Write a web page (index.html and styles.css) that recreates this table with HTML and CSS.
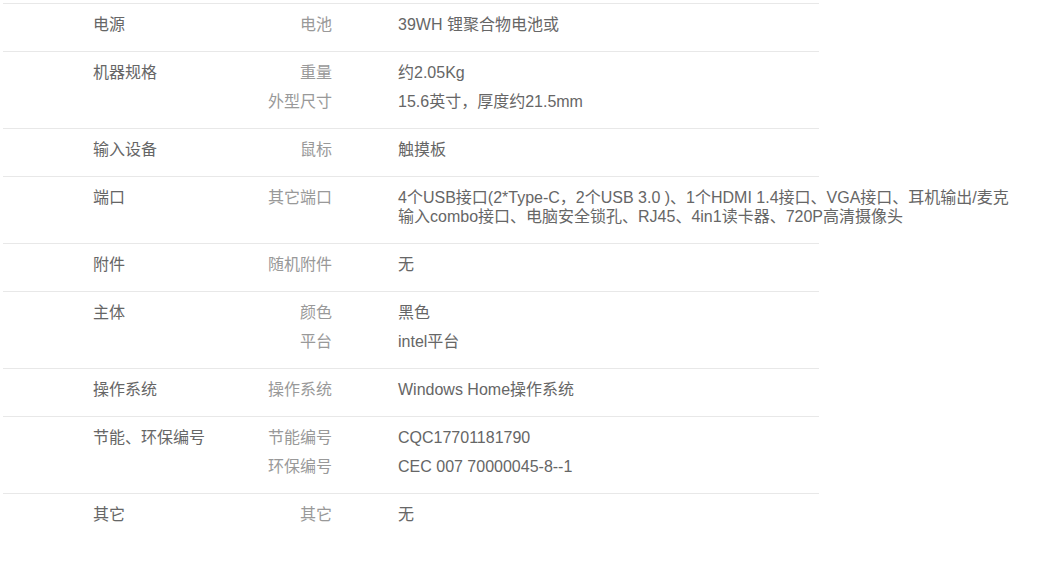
FILE: index.html
```html
<!DOCTYPE html>
<html lang="zh-CN">
<head>
    <meta charset="UTF-8">
    <meta name="viewport" content="width=device-width, initial-scale=1.0">
    <title>规格参数</title>
    <link rel="stylesheet" href="styles.css">
</head>
<body>
    <div class="spec-table">
        <!-- 电源 -->
        <div class="spec-row">
            <div class="spec-group">电源</div>
            <div class="spec-items">
                <div class="spec-item"><span class="spec-key">电池</span><span class="spec-val">39WH 锂聚合物电池或</span></div>
            </div>
        </div>

        <div class="spec-row">
            <div class="spec-group">机器规格</div>
            <div class="spec-items">
                <div class="spec-item"><span class="spec-key">重量</span><span class="spec-val">约2.05Kg</span></div>
                <div class="spec-item"><span class="spec-key">外型尺寸</span><span class="spec-val">15.6英寸，厚度约21.5mm</span></div>
            </div>
        </div>

        <div class="spec-row">
            <div class="spec-group">输入设备</div>
            <div class="spec-items">
                <div class="spec-item"><span class="spec-key">鼠标</span><span class="spec-val">触摸板</span></div>
            </div>
        </div>

        <div class="spec-row">
            <div class="spec-group">端口</div>
            <div class="spec-items">
                <div class="spec-item"><span class="spec-key">其它端口</span><span class="spec-val">4个USB接口(2*Type-C，2个USB 3.0 )、1个HDMI 1.4接口、VGA接口、耳机输出/麦克输入combo接口、电脑安全锁孔、RJ45、4in1读卡器、720P高清摄像头</span></div>
            </div>
        </div>

        <div class="spec-row">
            <div class="spec-group">附件</div>
            <div class="spec-items">
                <div class="spec-item"><span class="spec-key">随机附件</span><span class="spec-val">无</span></div>
            </div>
        </div>

        <div class="spec-row">
            <div class="spec-group">主体</div>
            <div class="spec-items">
                <div class="spec-item"><span class="spec-key">颜色</span><span class="spec-val">黑色</span></div>
                <div class="spec-item"><span class="spec-key">平台</span><span class="spec-val">intel平台</span></div>
            </div>
        </div>

        <div class="spec-row">
            <div class="spec-group">操作系统</div>
            <div class="spec-items">
                <div class="spec-item"><span class="spec-key">操作系统</span><span class="spec-val">Windows Home操作系统</span></div>
            </div>
        </div>

        <div class="spec-row">
            <div class="spec-group">节能、环保编号</div>
            <div class="spec-items">
                <div class="spec-item"><span class="spec-key">节能编号</span><span class="spec-val">CQC17701181790</span></div>
                <div class="spec-item"><span class="spec-key">环保编号</span><span class="spec-val">CEC 007 70000045-8--1</span></div>
            </div>
        </div>

        <div class="spec-row">
            <div class="spec-group">其它</div>
            <div class="spec-items">
                <div class="spec-item"><span class="spec-key">其它</span><span class="spec-val">无</span></div>
            </div>
        </div>
    </div>
</body>
</html>
```

FILE: styles.css
```css
/* Estilos generales */
body {
    margin: 0;
    padding: 3px;
    background-color: #fff;
    font-family: "Liberation Sans", Arial, "Noto Sans CJK SC", sans-serif;
    font-size: 16px;
    line-height: 19px;
    color: #666;
}

.spec-table {
    width: 816px;
}

/* Filas */
.spec-row {
    display: flex;
    border-top: 1px solid #e8e8e8;
    padding: 11px 0 7px;
}

.spec-group {
    flex-shrink: 0;
    width: 140px;
    padding-left: 90px;
    color: #666;
}

.spec-items {
    flex-shrink: 0;
}

.spec-item {
    display: flex;
    margin-bottom: 10px;
}

.spec-key {
    flex-shrink: 0;
    width: 99px;
    text-align: right;
    color: #999;
}

.spec-val {
    flex-shrink: 0;
    width: 624px;
    margin-left: 66px;
    color: #666;
}
```
